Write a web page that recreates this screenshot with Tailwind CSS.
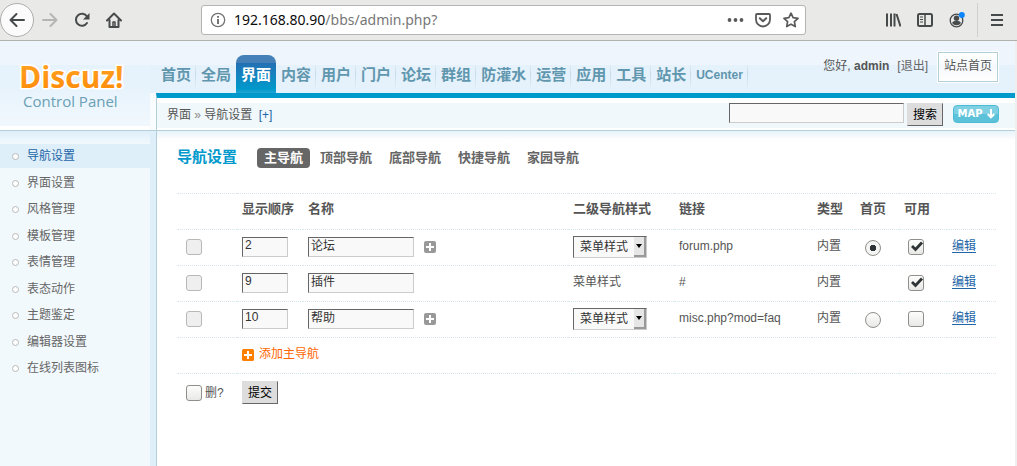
<!DOCTYPE html>
<html lang="zh-CN">
<head>
<meta charset="utf-8">
<title>Discuz! Control Panel</title>
<script src="https://cdn.jsdelivr.net/npm/@tailwindcss/browser@4"></script>
</head>
<body class="flex min-h-screen flex-col bg-[#efefef] font-['Liberation_Sans','Noto_Sans_CJK_SC',sans-serif] text-xs text-[#555]">

<!-- Browser toolbar -->
<div class="flex h-[41px] shrink-0 items-center border-b border-[#b1b1ad] bg-[#e9e9e8] text-[#474a4b]">
  <button aria-label="后退" class="flex size-[34px] shrink-0 items-center justify-center rounded-full border border-[#adadab] bg-[#fbfbfb]">
    <svg class="size-4" viewBox="0 0 16 16" fill="none" stroke="currentColor" stroke-width="2" stroke-linecap="round" stroke-linejoin="round"><path d="M15 8H1.500M7.500 2l-6 6 6 6"/></svg>
  </button>
  <button aria-label="前进" class="ml-2 flex w-4 shrink-0 text-[#b5b5b3]">
    <svg class="size-4" viewBox="0 0 16 16" fill="none" stroke="currentColor" stroke-width="2" stroke-linecap="round" stroke-linejoin="round"><path d="M1 8h13.500M8.500 2l6 6-6 6"/></svg>
  </button>
  <button aria-label="刷新" class="ml-4 flex shrink-0">
    <svg class="size-4" viewBox="0 0 16 16" fill="none"><path d="M13 4.500A6 6 0 1 0 13 11" stroke="currentColor" stroke-width="2" stroke-linecap="round"/><path d="M15.500 1v6.500H9z" fill="currentColor"/></svg>
  </button>
  <button aria-label="主页" class="ml-4 flex shrink-0">
    <svg class="size-4" viewBox="0 0 16 16" fill="none" stroke="currentColor" stroke-width="2" stroke-linecap="round" stroke-linejoin="round"><path d="M1 8.500l7-7 7 7M3.500 8v7h9V8"/><path d="M7 14v-4h2v4" stroke-width="1.500"/></svg>
  </button>
  <div class="ml-[79px] flex h-[30px] w-[605px] min-w-0 items-center rounded-[3px] border border-[#b4b4b2] bg-white pl-2 pr-1.5">
    <svg class="size-4 shrink-0 text-[#737373]" viewBox="0 0 16 16" fill="none" stroke="currentColor"><circle cx="8" cy="8" r="6.700" stroke-width="1.300"/><path d="M8 7v5M8 4v1.700" stroke-width="2"/></svg>
    <div class="ml-2 flex-1 font-['Noto_Sans'] text-sm text-[#777]"><span class="text-[#0c0c0d]">192.168.80.90</span>/bbs/admin.php?</div>
    <svg class="h-4 w-[18px] shrink-0 text-[#5a5a5a]" viewBox="0 0 18 16" fill="currentColor"><circle cx="2.500" cy="8" r="1.900"/><circle cx="8.500" cy="8" r="1.900"/><circle cx="14.500" cy="8" r="1.900"/></svg>
    <svg class="ml-2.5 size-4 shrink-0 text-[#5a5a5a]" viewBox="0 0 16 16" fill="none" stroke="currentColor" stroke-linecap="round" stroke-linejoin="round"><path d="M2 2h12a1 1 0 0 1 1 1v4.500a7 7 0 0 1-14 0V3a1 1 0 0 1 1-1z" stroke-width="1.800"/><path d="M4.800 6.300L8 9.300l3.200-3" stroke-width="2"/></svg>
    <svg class="ml-3 size-4 shrink-0 text-[#5a5a5a]" viewBox="0 0 16 16" fill="none" stroke="currentColor" stroke-width="1.700" stroke-linejoin="round"><path d="M8 1.200l2.100 4.500 4.900.6-3.600 3.400.9 4.900L8 12.200l-4.300 2.400.9-4.900L1 6.300l4.900-.6z"/></svg>
  </div>
  <div class="ml-auto flex shrink-0 items-center gap-4 pr-[13px]">
    <svg class="size-4" viewBox="0 0 16 16" fill="none" stroke="currentColor" stroke-width="2"><path d="M2 1.500v13M6 1.500v13M9.500 1.500v13M11.500 2l4 12.500"/></svg>
    <svg class="size-4" viewBox="0 0 16 16" fill="none" stroke="currentColor"><rect x="1" y="2" width="14" height="12" rx="1.500" stroke-width="2"/><path d="M8 2v12" stroke-width="1.500"/><path d="M3 5h3M3 7.500h3M3 10h3"/></svg>
    <svg class="size-4" viewBox="0 0 16 16"><circle cx="7.500" cy="8.500" r="6.300" fill="none" stroke="#474a4b" stroke-width="1.300"/><circle cx="7.500" cy="6.300" r="2.700" fill="#474a4b"/><path d="M3 11c1-1.700 2-2 4.500-2s3.500.300 4.500 2a5.500 5.500 0 0 1-9 0z" fill="#474a4b"/><circle cx="12.800" cy="3" r="3" fill="#0a84ff"/></svg>
    <div class="flex items-center">
      <span class="-ml-1 h-[34px] w-px bg-[#cfcfcd]"></span>
      <button aria-label="菜单" class="ml-3 flex"><svg class="h-4 w-3.5" viewBox="0 0 14 16" stroke="currentColor" stroke-width="2"><path d="M1 3h12M1 8h12M1 13h12"/></svg></button>
    </div>
  </div>
</div>

<!-- Control panel header -->
<header class="mr-0.5 flex h-[90px] shrink-0 border-b border-[#b5cfd9] bg-[linear-gradient(#eef5fc_24px,#e5f1fb_24px,#e5f1fb_52px)]">
  <a href="#" class="flex w-[150px] shrink-0 flex-col bg-[linear-gradient(#eef5fc_24px,#e7f3fc_24px,#e7f3fc_46px,#f1f8fd_85px,#fff_85px)] pl-5 font-['Open_Sans',sans-serif]">
    <svg class="mt-4 h-9 w-[110px] shrink-0 overflow-visible" viewBox="0 0 110 36" role="img" aria-label="Discuz!">
      <defs><linearGradient id="lg" x1="0" y1="0" x2="0" y2="1"><stop offset="0" stop-color="#ffa62b"/><stop offset="1" stop-color="#ff8800"/></linearGradient></defs>
      <text x="-1" y="31" font-family="Open Sans" font-weight="700" font-size="30" stroke="#fff" stroke-width="3" paint-order="stroke" fill="url(#lg)">Discuz!</text>
    </svg>
    <span class="-mt-0.5 ml-[3px] text-[15px] leading-5 text-[#6a9fb5]">Control Panel</span>
  </a>
  <div class="flex min-w-0 flex-1 flex-col">
    <div class="flex h-[52px] shrink-0 pl-1.5">
      <nav class="mt-3.5 flex h-[38px] shrink-0 whitespace-nowrap text-[15px] font-bold leading-10 text-[#6097ae]">
        <a href="#" class="h-[38px] border-r pl-[5px] pr-1 [border-image:linear-gradient(transparent_25%,#c5dae5_50%,transparent_90%)_1]">首页</a>
        <a href="#" class="px-[5px]">全局</a>
        <a href="#" class="h-[43px] rounded-t-lg bg-[linear-gradient(#4580b8_8px,#2470b3_8px,#0099cc_34px,#4db3dc)] px-[5px] text-white">界面</a>
        <a href="#" class="h-[38px] border-r pl-[5px] pr-1 [border-image:linear-gradient(transparent_25%,#c5dae5_50%,transparent_90%)_1]">内容</a>
        <a href="#" class="h-[38px] border-r pl-[5px] pr-1 [border-image:linear-gradient(transparent_25%,#c5dae5_50%,transparent_90%)_1]">用户</a>
        <a href="#" class="h-[38px] border-r pl-[5px] pr-1 [border-image:linear-gradient(transparent_25%,#c5dae5_50%,transparent_90%)_1]">门户</a>
        <a href="#" class="h-[38px] border-r pl-[5px] pr-1 [border-image:linear-gradient(transparent_25%,#c5dae5_50%,transparent_90%)_1]">论坛</a>
        <a href="#" class="h-[38px] border-r pl-[5px] pr-1 [border-image:linear-gradient(transparent_25%,#c5dae5_50%,transparent_90%)_1]">群组</a>
        <a href="#" class="h-[38px] border-r pl-[5px] pr-1 [border-image:linear-gradient(transparent_25%,#c5dae5_50%,transparent_90%)_1]">防灌水</a>
        <a href="#" class="h-[38px] border-r pl-[5px] pr-1 [border-image:linear-gradient(transparent_25%,#c5dae5_50%,transparent_90%)_1]">运营</a>
        <a href="#" class="h-[38px] border-r pl-[5px] pr-1 [border-image:linear-gradient(transparent_25%,#c5dae5_50%,transparent_90%)_1]">应用</a>
        <a href="#" class="h-[38px] border-r pl-[5px] pr-1 [border-image:linear-gradient(transparent_25%,#c5dae5_50%,transparent_90%)_1]">工具</a>
        <a href="#" class="h-[38px] border-r pl-[5px] pr-1 [border-image:linear-gradient(transparent_25%,#c5dae5_50%,transparent_90%)_1]">站长</a>
        <a href="#" class="h-[38px] border-r pl-[5px] pr-1 text-xs leading-10 [border-image:linear-gradient(transparent_25%,#c5dae5_50%,transparent_90%)_1]">UCenter</a>
      </nav>
      <div class="ml-auto flex items-start whitespace-nowrap pr-4 pt-2.5">
        <span class="pt-1.5 leading-[18px]">您好, <b>admin</b></span>
        <a href="#" class="ml-2 pt-1.5 leading-[18px] text-[#666]">[退出]</a>
        <a href="#" class="ml-[9px] border border-white"><span class="block border border-[#b5cfd9] bg-[linear-gradient(#fff,#f5f8fa,#fff)] px-[5px] pt-1 pb-1.5 leading-[18px]">站点首页</span></a>
      </div>
    </div>
    <div class="flex min-h-0 flex-1">
      <div class="w-1.5 shrink-0 bg-[#f8fcff]"></div>
      <div class="flex flex-1 items-start border-l border-t-[5px] border-l-[#b5cfd9] border-t-[#0099cc] bg-[linear-gradient(#fff_5px,#f0f8fc_5px,#f0f8fc_30px,#fff_30px)] pr-4 pt-[5px]">
        <div class="pl-2.5 pt-[3px] leading-[18px]">界面 <span class="text-[#888]">»</span> 导航设置 <a href="#" class="ml-[3px] text-[#2366a8]">[+]</a></div>
        <input type="text" aria-label="搜索关键词" class="ml-auto h-5 w-[175px] border border-[#666] border-b-[#ccc] border-r-[#ccc] bg-[#f9f9f9] px-1">
        <button class="ml-[3px] h-[23px] border border-[#ddd] border-b-[#666] border-r-[#666] bg-[#ddd] px-[5px] leading-5 text-black">搜索</button>
        <button class="ml-2.5 mt-0.5 flex h-[18px] w-[46px] items-center justify-center gap-1 rounded border border-[#4bbbd5] bg-[linear-gradient(#7ed0e2_8px,#5cc2d9_8px)] font-['DejaVu_Sans'] text-[10px] font-bold leading-4 text-white">MAP<svg class="h-2.5 w-2" viewBox="0 0 8 10" fill="none" stroke="currentColor" stroke-width="2"><path d="M4 0v8M.7 5L4 8.300 7.300 5"/></svg></button>
      </div>
    </div>
  </div>
</header>

<div class="mr-0.5 flex flex-1 bg-white">
  <!-- Sidebar -->
  <aside class="flex w-[157px] shrink-0 border-r border-[#b5cfd9] bg-[#deeffa] pr-1.5">
    <ul class="grid flex-1 auto-rows-min content-start bg-[linear-gradient(#deeefa,#f2f9fd_13px)] pt-3 text-[#666] [&_i]:size-[7px] [&_i]:rounded-full [&_i]:border [&_i]:border-[#b8b8b8] [&_i]:bg-white [&_a]:flex [&_a]:h-6 [&_a]:items-center [&_a]:gap-2 [&_a]:pl-3 [&>li]:py-px [&>li:nth-child(odd)]:pb-0.5">
      <li><a href="#" class="bg-[#deeffa] text-[#2366a8]"><i></i>导航设置</a></li>
      <li><a href="#"><i></i>界面设置</a></li>
      <li><a href="#"><i></i>风格管理</a></li>
      <li><a href="#"><i></i>模板管理</a></li>
      <li><a href="#"><i></i>表情管理</a></li>
      <li><a href="#"><i></i>表态动作</a></li>
      <li><a href="#"><i></i>主题鉴定</a></li>
      <li><a href="#"><i></i>编辑器设置</a></li>
      <li><a href="#"><i></i>在线列表图标</a></li>
    </ul>
  </aside>

  <!-- Content -->
  <main class="min-w-0 flex-1 bg-[linear-gradient(#e6f2fa,#fff_9px)] pl-5 pr-[19px] pt-4">
    <div class="flex h-5 items-center">
      <h1 class="text-[15px] font-bold leading-5 text-[#0099cc]">导航设置</h1>
      <nav class="ml-5 flex gap-[3px] pt-px text-[13px] font-bold leading-5 text-[#666]">
        <a href="#" class="h-5 rounded bg-[#666] px-[7px] text-white">主导航</a>
        <a href="#" class="px-[7px]">顶部导航</a>
        <a href="#" class="px-[7px]">底部导航</a>
        <a href="#" class="px-[7px]">快捷导航</a>
        <a href="#" class="px-[7px]">家园导航</a>
      </nav>
    </div>

    <form class="mt-[26px]">
      <table class="w-full table-fixed border-t border-dotted border-[#d5e6f0] text-left [&_td]:pt-0 [&_td]:pb-0.5 [&_td]:pl-[5px] [&_th]:pl-[5px] [&_tr]:h-9 [&_tr]:border-b [&_tr]:border-dotted [&_tr]:border-[#d5e6f0]">
        <colgroup><col class="w-[60px]"><col class="w-[66px]"><col><col class="w-[106px]"><col class="w-[138px]"><col class="w-[43px]"><col class="w-11"><col class="w-[48px]"><col class="w-[49px]"></colgroup>
        <thead>
          <tr class="text-[13px] leading-4 [&>th]:pb-1.5">
            <th></th><th>显示顺序</th><th>名称</th><th>二级导航样式</th><th>链接</th><th>类型</th><th>首页</th><th>可用</th><th></th>
          </tr>
        </thead>
        <tbody class="leading-[18px]">
          <tr>
            <td><input type="checkbox" disabled aria-label="删除 论坛" class="ml-1 block size-4 appearance-none rounded-[3px] border border-[#b8b8b5] bg-[#efefef]"></td>
            <td><input type="text" value="2" aria-label="论坛 显示顺序" class="block h-5 w-[46px] border border-[#666] border-b-[#ccc] border-r-[#ccc] bg-[#f9f9f9] px-0.5 pb-1 leading-4 text-[#333]"></td>
            <td><div class="flex items-center gap-2.5"><input type="text" value="论坛" aria-label="论坛 名称" class="h-5 w-[106px] border border-[#666] border-b-[#ccc] border-r-[#ccc] bg-[#f9f9f9] px-0.5 pb-1 leading-4 text-[#333]"><button type="button" aria-label="添加子导航"><svg class="block size-3" viewBox="0 0 12 12"><rect width="12" height="12" rx="2" fill="#999"/><path d="M6 2v8M2 6h8" stroke="#fff" stroke-width="2"/></svg></button></div></td>
            <td><div class="relative h-[22px] w-[74px]"><select aria-label="论坛 二级导航样式" class="block size-full appearance-none border border-[#666] border-b-[#ccc] border-r-[#ccc] bg-[#f9f9f9] pl-1.5 text-xs text-[#333]"><option>菜单样式</option></select><span class="pointer-events-none absolute right-px top-px flex h-5 w-3 items-center justify-center border-b-2 border-r-2 border-[#999] bg-[#e6e6e6]"><svg class="h-1 w-1.5" viewBox="0 0 6 4"><path d="M0 0h6L3 4z"/></svg></span></div></td>
            <td class="pb-1!">forum.php</td>
            <td class="pb-1!">内置</td>
            <td><input type="radio" name="home" checked aria-label="论坛 设为首页" class="ml-[5px] mt-0.5 block size-4 appearance-none rounded-full border border-[#8f8f8b] bg-[linear-gradient(#fdfdfd,#e8e8e6)] checked:bg-[radial-gradient(circle,#2e3436_3px,#f4f4f3_3.500px)]"></td>
            <td><div class="relative ml-1 size-4"><input type="checkbox" checked aria-label="论坛 可用" class="block size-4 appearance-none rounded-[3px] border border-[#8f8f8b] bg-[linear-gradient(#fdfdfd,#e8e8e6)]"><svg class="pointer-events-none absolute inset-0 size-4" viewBox="0 0 16 16" fill="none" stroke="#2e3436" stroke-width="2.800"><path d="M4 7l3.500 3.500L14 3.500"/></svg></div></td>
            <td class="pb-1!"><a href="#" class="text-[#2366a8] underline underline-offset-2">编辑</a></td>
          </tr>
          <tr>
            <td><input type="checkbox" disabled aria-label="删除 插件" class="ml-1 block size-4 appearance-none rounded-[3px] border border-[#b8b8b5] bg-[#efefef]"></td>
            <td><input type="text" value="9" aria-label="插件 显示顺序" class="block h-5 w-[46px] border border-[#666] border-b-[#ccc] border-r-[#ccc] bg-[#f9f9f9] px-0.5 pb-1 leading-4 text-[#333]"></td>
            <td><input type="text" value="插件" aria-label="插件 名称" class="block h-5 w-[106px] border border-[#666] border-b-[#ccc] border-r-[#ccc] bg-[#f9f9f9] px-0.5 pb-1 leading-4 text-[#333]"></td>
            <td class="pb-1!">菜单样式</td>
            <td class="pb-1!">#</td>
            <td class="pb-1!">内置</td>
            <td></td>
            <td><div class="relative ml-1 size-4"><input type="checkbox" checked aria-label="插件 可用" class="block size-4 appearance-none rounded-[3px] border border-[#8f8f8b] bg-[linear-gradient(#fdfdfd,#e8e8e6)]"><svg class="pointer-events-none absolute inset-0 size-4" viewBox="0 0 16 16" fill="none" stroke="#2e3436" stroke-width="2.800"><path d="M4 7l3.500 3.500L14 3.500"/></svg></div></td>
            <td class="pb-1!"><a href="#" class="text-[#2366a8] underline underline-offset-2">编辑</a></td>
          </tr>
          <tr>
            <td><input type="checkbox" disabled aria-label="删除 帮助" class="ml-1 block size-4 appearance-none rounded-[3px] border border-[#b8b8b5] bg-[#efefef]"></td>
            <td><input type="text" value="10" aria-label="帮助 显示顺序" class="block h-5 w-[46px] border border-[#666] border-b-[#ccc] border-r-[#ccc] bg-[#f9f9f9] px-0.5 pb-1 leading-4 text-[#333]"></td>
            <td><div class="flex items-center gap-2.5"><input type="text" value="帮助" aria-label="帮助 名称" class="h-5 w-[106px] border border-[#666] border-b-[#ccc] border-r-[#ccc] bg-[#f9f9f9] px-0.5 pb-1 leading-4 text-[#333]"><button type="button" aria-label="添加子导航"><svg class="block size-3" viewBox="0 0 12 12"><rect width="12" height="12" rx="2" fill="#999"/><path d="M6 2v8M2 6h8" stroke="#fff" stroke-width="2"/></svg></button></div></td>
            <td><div class="relative h-[22px] w-[74px]"><select aria-label="帮助 二级导航样式" class="block size-full appearance-none border border-[#666] border-b-[#ccc] border-r-[#ccc] bg-[#f9f9f9] pl-1.5 text-xs text-[#333]"><option>菜单样式</option></select><span class="pointer-events-none absolute right-px top-px flex h-5 w-3 items-center justify-center border-b-2 border-r-2 border-[#999] bg-[#e6e6e6]"><svg class="h-1 w-1.5" viewBox="0 0 6 4"><path d="M0 0h6L3 4z"/></svg></span></div></td>
            <td class="pb-1!">misc.php?mod=faq</td>
            <td class="pb-1!">内置</td>
            <td><input type="radio" name="home" aria-label="帮助 设为首页" class="ml-[5px] mt-0.5 block size-4 appearance-none rounded-full border border-[#8f8f8b] bg-[linear-gradient(#fdfdfd,#e8e8e6)]"></td>
            <td><input type="checkbox" aria-label="帮助 可用" class="ml-1 block size-4 appearance-none rounded-[3px] border border-[#8f8f8b] bg-[linear-gradient(#fdfdfd,#e8e8e6)]"></td>
            <td class="pb-1!"><a href="#" class="text-[#2366a8] underline underline-offset-2">编辑</a></td>
          </tr>
          <tr>
            <td></td>
            <td colspan="8" class="pb-1!"><a href="#" class="flex items-center gap-[5px] text-[#ff6600]"><svg class="mt-0.5 size-3" viewBox="0 0 12 12"><rect width="12" height="12" rx="1.500" fill="#ff8000"/><path d="M6 2v8M2 6h8" stroke="#fff" stroke-width="2"/></svg>添加主导航</a></td>
          </tr>
        </tbody>
      </table>
      <div class="flex items-center pt-[7px]">
        <label class="flex w-14 items-center gap-[3px] pl-[9px]"><input type="checkbox" class="size-4 shrink-0 appearance-none rounded-[3px] border border-[#8f8f8b] bg-[linear-gradient(#fdfdfd,#e8e8e6)]"><span class="whitespace-nowrap">删?</span></label>
        <button type="submit" class="ml-[9px] h-[23px] border border-[#ddd] border-b-[#666] border-r-[#666] bg-[#ddd] px-[5px] leading-5 text-black">提交</button>
      </div>
    </form>
  </main>
</div>
</body>
</html>
